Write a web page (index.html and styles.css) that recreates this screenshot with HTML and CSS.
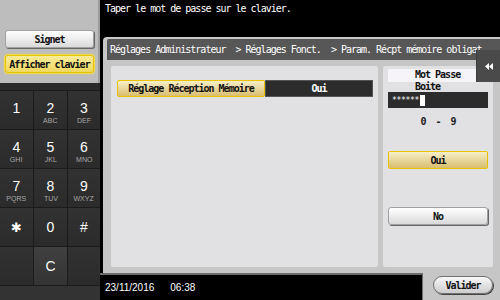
FILE: index.html
```html
<!DOCTYPE html>
<html lang="fr">
<head>
    <meta charset="UTF-8">
    <meta name="viewport" content="width=device-width, initial-scale=1.0">
    <title>Mot de passe boite</title>
    <link rel="stylesheet" href="styles.css">
</head>
<body>

    <div class="screen">
        <aside class="side">
            <div class="side-top">
                <div class="btn btn-white side-btn">Signet</div>
                <div class="btn btn-yellow side-btn">Afficher clavier</div>
            </div>
            <div class="keypad">
                <div class="keys">
                    <div class="key"><span class="num">1</span><span class="abc">&nbsp;</span></div>
                    <div class="key"><span class="num">2</span><span class="abc">ABC</span></div>
                    <div class="key"><span class="num">3</span><span class="abc">DEF</span></div>
                    <div class="key"><span class="num">4</span><span class="abc">GHI</span></div>
                    <div class="key"><span class="num">5</span><span class="abc">JKL</span></div>
                    <div class="key"><span class="num">6</span><span class="abc">MNO</span></div>
                    <div class="key"><span class="num">7</span><span class="abc">PQRS</span></div>
                    <div class="key"><span class="num">8</span><span class="abc">TUV</span></div>
                    <div class="key"><span class="num">9</span><span class="abc">WXYZ</span></div>
                    <div class="key key-single"><span class="star">&#10033;</span></div>
                    <div class="key key-single">0</div>
                    <div class="key key-single">#</div>
                    <div class="key key-empty"></div>
                    <div class="key key-single key-clear">C</div>
                    <div class="key key-empty"></div>
                </div>
            </div>
        </aside>

        <main class="content">
            <div class="message">Taper le mot de passe sur le clavier.</div>

            <section class="frame">
                <div class="crumbs">Réglages Administrateur  &gt; Réglages Fonct.  &gt; Param. Récpt mémoire obligat.</div>
                <div class="tab">
                    <svg width="8" height="7" viewBox="0 0 8 7"><path d="M4 0L0 3.5L4 7Z M8 0L4 3.5L8 7Z" fill="#fff"/></svg>
                </div>
                <div class="panels">
                    <div class="panel panel-main">
                        <div class="setting-row">
                            <div class="btn btn-gold setting-label">Réglage Réception Mémoire</div>
                            <div class="setting-value">Oui</div>
                        </div>
                    </div>
                    <div class="panel panel-side">
                        <div class="pw-label">Mot Passe<br>Boite</div>
                        <div class="pw-field">******<span class="caret"></span></div>
                        <div class="pw-range">0  -  9</div>
                        <div class="btn btn-gold choice choice-yes">Oui</div>
                        <div class="btn btn-white choice choice-no">No</div>
                    </div>
                </div>
            </section>

            <footer class="status">
                <div class="clock"><span>23/11/2016</span><span>06:38</span></div>
                <div class="confirm"><div class="btn btn-pill">Valider</div></div>
            </footer>
        </main>
    </div>

</body>
</html>
```

FILE: styles.css
```css
body {
    margin: 0;
    padding: 0;
    background: #000;
    font-family: 'DejaVu Sans Mono', 'Liberation Mono', monospace;
    font-size: 10px;
    letter-spacing: -1px;
}
.screen {
    display: flex;
    width: 500px;
    height: 300px;
    overflow: hidden;
}

/* left column */
.side {
    width: 100px;
    display: flex;
    flex-direction: column;
}
.side-top {
    height: 85px;
    box-sizing: border-box;
    padding: 30px 0 0 5px;
    background: #bdbdbd;
    border-right: 2px solid #9c9c9c;
    display: flex;
    flex-direction: column;
    gap: 7px;
}
.btn {
    box-sizing: border-box;
    display: flex;
    align-items: center;
    justify-content: center;
    font-weight: bold;
    color: #111;
    white-space: pre;
}
.btn-white {
    background: linear-gradient(#ffffff, #dadada);
    border: 1px solid #a0a0a0;
    border-radius: 3px;
    box-shadow: 1px 1px 0 #666;
}
.btn-yellow {
    background: linear-gradient(#f9ec9a, #f0d860);
    border: 1px solid #e8c400;
    border-radius: 3px;
    box-shadow: 0 0 1px 1px #f5dc40;
}
.btn-gold {
    background: linear-gradient(#f8efc8, #d8be6e);
    border: 1px solid #e6c200;
    border-radius: 2px;
}
.side-btn {
    width: 89px;
    height: 18px;
}
.keypad {
    flex: 1;
    background: #2b2b2b;
    padding-top: 7px;
    border-bottom: 14px solid #333;
}
.keys {
    display: grid;
    grid-template-columns: 33px 33px 32px;
    grid-auto-rows: 38px;
    gap: 1px;
    background: #1b1b1b;
    border-top: 1px solid #1b1b1b;
    border-bottom: 1px solid #1b1b1b;
    width: 100px;
}
.key {
    background: linear-gradient(#323232, #2b2b2b);
    display: flex;
    flex-direction: column;
    align-items: center;
    padding-top: 9px;
    box-sizing: border-box;
    font-family: 'Liberation Sans', Arial, sans-serif;
    letter-spacing: 0;
    color: #fff;
}
.num {
    font-size: 14px;
    line-height: 16px;
}
.abc {
    font-size: 8px;
    line-height: 9px;
    color: #a8a8a8;
    transform: scaleX(0.88);
}
.key-single {
    padding-top: 0;
    justify-content: center;
    font-size: 14px;
}
.star {
    font-family: 'DejaVu Sans', sans-serif;
    font-size: 13px;
}
.key-clear {
    background: linear-gradient(#404040, #343434);
}

/* right side */
.content {
    flex: 1;
    display: flex;
    flex-direction: column;
}
.message {
    height: 37px;
    box-sizing: border-box;
    padding: 3px 0 0 5px;
    color: #fff;
}
.frame {
    position: relative;
    height: 236px;
    margin-left: 3px;
    background: #c6c6c6;
    border-top-left-radius: 4px;
    padding-top: 2px;
    box-sizing: border-box;
}
.crumbs {
    height: 21px;
    margin-left: 4px;
    padding-left: 3px;
    background: #575757;
    border-top-left-radius: 2px;
    color: #fff;
    line-height: 21px;
    white-space: pre;
}
.tab {
    position: absolute;
    right: 0;
    top: 13px;
    width: 23px;
    height: 32px;
    background: #4a4a4a;
    border-left: 1px solid #3c3c3c;
    display: flex;
    align-items: center;
    justify-content: center;
}
.panels {
    display: flex;
    gap: 5px;
    padding: 6px 7px 0 8px;
    height: 201px;
}
.panel {
    background: #e1e0e3;
    border-radius: 2px;
}
.panel-main {
    width: 267px;
    box-sizing: border-box;
    padding: 14px 5px 0 6px;
}
.setting-row {
    display: flex;
    height: 17px;
}
.setting-label {
    width: 148px;
}
.setting-value {
    flex: 1;
    background: #2c2c2c;
    border: 1px solid #555;
    color: #fff;
    font-weight: bold;
    display: flex;
    align-items: center;
    justify-content: center;
}
.panel-side {
    width: 110px;
    box-sizing: border-box;
    padding: 3px 5px 0 5px;
    display: flex;
    flex-direction: column;
}
.pw-label {
    width: 89px;
    height: 13px;
    box-sizing: border-box;
    padding-left: 27px;
    background: #f7f4f9;
    line-height: 12px;
    font-weight: bold;
    color: #111;
}
.pw-field {
    margin-top: 10px;
    height: 16px;
    background: #2c2c2c;
    color: #fff;
    display: flex;
    align-items: center;
    padding-left: 4px;
    font-size: 8px;
    letter-spacing: -0.3px;
}
.caret {
    width: 5px;
    height: 11px;
    background: #fff;
    margin-left: 1px;
}
.pw-range {
    margin-top: 8px;
    line-height: 12px;
    text-align: center;
    white-space: pre;
    font-weight: bold;
    color: #222;
}
.choice {
    height: 18px;
}
.choice-yes {
    margin-top: 23px;
}
.choice-no {
    margin-top: 38px;
}

.status {
    flex: 1;
    display: flex;
}
.clock {
    flex: 1;
    display: flex;
    gap: 16px;
    align-items: center;
    padding-left: 5px;
    border-top: 2px solid #6c6c6c;
    border-right: 1px solid #6c6c6c;
    color: #fff;
    font-family: 'Liberation Sans', Arial, sans-serif;
    font-size: 10px;
    letter-spacing: 0;
}
.confirm {
    width: 77px;
    background: #c6c6c6;
    padding: 3px 0 0 10px;
    box-sizing: border-box;
}
.btn-pill {
    width: 60px;
    height: 18px;
    background: linear-gradient(#f8f8f8, #cdcdcd);
    border: 1px solid #707070;
    border-radius: 9px;
    box-shadow: 1px 1px 0 #444;
}
```
